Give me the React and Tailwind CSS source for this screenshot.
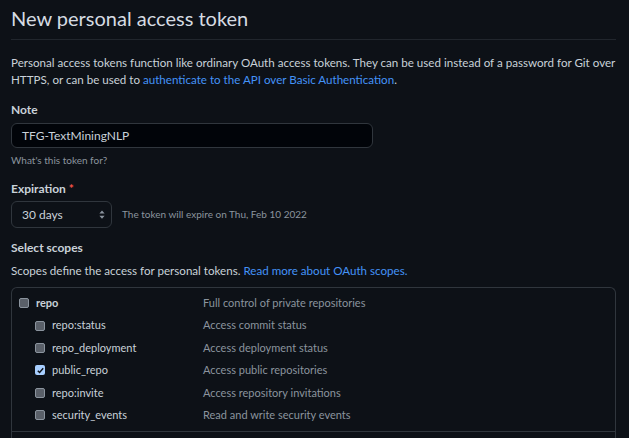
import React from "react";

const scopes = [
  { name: "repo", desc: "Full control of private repositories", top: true },
  { name: "repo:status", desc: "Access commit status" },
  { name: "repo_deployment", desc: "Access deployment status" },
  { name: "public_repo", desc: "Access public repositories", checked: true },
  { name: "repo:invite", desc: "Access repository invitations" },
  { name: "security_events", desc: "Read and write security events" },
];

const Box = ({ checked }) =>
  checked ? (
    <span className="flex h-[10px] w-[10px] items-center justify-center rounded-[2px] bg-[#a8cfff]">
      <svg viewBox="0 0 10 10" className="h-[9px] w-[9px]">
        <path d="M2 5.2l2 2 4-4.6" fill="none" stroke="#0d1117" strokeWidth="1.6" />
      </svg>
    </span>
  ) : (
    <span className="h-[10px] w-[10px] rounded-[2px] border border-[#8b949e] bg-[#5a6069]" />
  );

export default function App() {
  return (
    <div
      className="h-[438px] w-[629px] overflow-hidden bg-[#0d1117] pl-[11px] pr-[13px] text-[#c9d1d9]"
      style={{ fontFamily: 'Lato, "Open Sans", sans-serif' }}
    >
      <h1 className="pt-[5px] pb-[8px] text-[20px] leading-[26px] font-normal text-[#d5dbe2] border-b border-[#21262d]">
        New personal access token
      </h1>

      <p className="mt-[14px] text-[11.6px] leading-[17px]">
        Personal access tokens function like ordinary OAuth access tokens. They can be used instead of a password for Git over HTTPS, or can be used to{" "}
        <a className="text-[#4493f8]">authenticate to the API over Basic Authentication</a>.
      </p>

      <div className="mt-[14px] text-[12px] font-bold leading-[16px]">Note</div>
      <div className="mt-[5px] flex h-[25px] w-[362px] items-center rounded-[6px] border border-[#30363d] bg-[#010409] px-[10px] text-[12px]">
        TFG-TextMiningNLP
      </div>
      <div className="mt-[5px] text-[10px] leading-[14px] text-[#8b949e]">What's this token for?</div>

      <div className="mt-[14px] text-[12px] font-bold leading-[16px]">
        Expiration <span className="text-[#f85149]">*</span>
      </div>
      <div className="mt-[4px] flex items-center gap-[10px]">
        <div className="flex h-[27px] w-[101px] items-center justify-between rounded-[6px] border border-[#30363d] bg-[#0d1117] pl-[10px] pr-[6px] text-[12px]">
          <span>30 days</span>
          <svg viewBox="0 0 8 12" className="h-[9px] w-[6px]">
            <path d="M4 0.5L7.5 4.5H0.5Z M4 11.5L0.5 7.5H7.5Z" fill="#8b949e" />
          </svg>
        </div>
        <span className="text-[10px] text-[#8b949e]">The token will expire on Thu, Feb 10 2022</span>
      </div>

      <div className="mt-[12px] text-[12px] font-bold leading-[16px]">Select scopes</div>
      <p className="mt-[6px] text-[11.6px] leading-[17px]">
        Scopes define the access for personal tokens.{" "}
        <a className="text-[#4493f8]">Read more about OAuth scopes.</a>
      </p>

      <div className="mt-[8px] rounded-t-[6px] border border-b-0 border-[#30363d]">
        <div className="border-b border-[#30363d] pt-[4px] pb-[5px]">
          {scopes.map((s) => (
            <div key={s.name} className="flex h-[22.4px] items-center text-[11px]">
              <div className={`flex w-[191px] items-center gap-[7px] ${s.top ? "pl-[7px] font-bold" : "pl-[23px]"}`}>
                <Box checked={s.checked} />
                <span>{s.name}</span>
              </div>
              <span className="text-[#8b949e]">{s.desc}</span>
            </div>
          ))}
        </div>
        <div className="h-[20px]" />
      </div>
    </div>
  );
}
